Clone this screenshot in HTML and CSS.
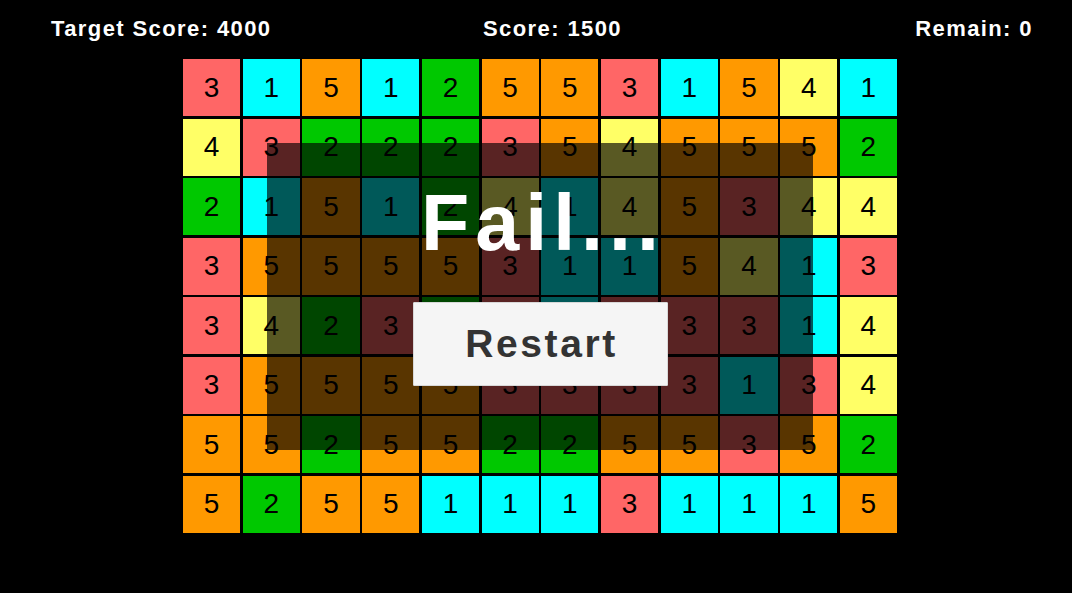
FILE: index.html
```html
<!DOCTYPE html>
<html>
<head>
    <title>Match Game</title>
    <link rel="stylesheet" href="styles.css">
</head>
<body>
    <div class="hud">
        <span class="target">Target Score: 4000</span>
        <span class="score">Score: 1500</span>
        <span class="remain">Remain: 0</span>
    </div>

    <div class="board-wrap">
        <div class="board" id="board"></div>
        <div class="shade"></div>
        <div class="result">
            <div class="fail">Fail...</div>
            <button class="restart">Restart</button>
        </div>
    </div>

    <script>
        const rows = [
            [3,1,5,1,2,5,5,3,1,5,4,1],
            [4,3,2,2,2,3,5,4,5,5,5,2],
            [2,1,5,1,2,4,1,4,5,3,4,4],
            [3,5,5,5,5,3,1,1,5,4,1,3],
            [3,4,2,3,2,3,1,3,3,3,1,4],
            [3,5,5,5,5,3,3,3,3,1,3,4],
            [5,5,2,5,5,2,2,5,5,3,5,2],
            [5,2,5,5,1,1,1,3,1,1,1,5]
        ];
        const board = document.getElementById('board');
        rows.forEach(row => {
            row.forEach(n => {
                const cell = document.createElement('div');
                cell.className = 'cell c' + n;
                cell.textContent = n;
                board.appendChild(cell);
            });
        });
    </script>
</body>
</html>
```

FILE: styles.css
```css
body {
    margin: 0;
    background: #000;
    font-family: "Liberation Sans", Arial, sans-serif;
}
.hud {
    display: flex;
    height: 59px;
    box-sizing: border-box;
    padding: 18px 39px 0 51px;
    color: #fff;
    font-size: 22px;
    font-weight: bold;
    line-height: 1;
    letter-spacing: 1.4px;
}
.target {
    width: 432px;
}
.score {
    margin-right: auto;
}
.board-wrap {
    position: relative;
    width: 714px;
    height: 474px;
    margin-left: 183px;
}
.board {
    display: grid;
    grid-template-columns: repeat(12, 1fr);
    grid-template-rows: repeat(8, 1fr);
    gap: 2.5px;
    width: 100%;
    height: 100%;
}
.cell {
    display: flex;
    align-items: center;
    justify-content: center;
    font-size: 28px;
    color: #000;
}
.c1 { background: #00ffff; }
.c2 { background: #00c800; }
.c3 { background: #ff6666; }
.c4 { background: #ffff66; }
.c5 { background: #ff9900; }
.shade {
    position: absolute;
    top: 84px;
    left: 84px;
    right: 84px;
    bottom: 83px;
    background: rgba(0, 0, 0, 0.65);
}
.result {
    position: absolute;
    top: 124px;
    left: 0;
    right: 0;
    display: flex;
    flex-direction: column;
    align-items: center;
}
.fail {
    color: #fff;
    font-size: 79px;
    font-weight: bold;
    line-height: 1;
    letter-spacing: 6px;
    margin-right: -6px;
}
.restart {
    margin-top: 40px;
    width: 255px;
    height: 84px;
    background: #f5f5f5;
    border: 1px solid #d8d8d8;
    border-radius: 1px;
    color: #333;
    font-family: "Liberation Sans", Arial, sans-serif;
    font-size: 39px;
    font-weight: bold;
    letter-spacing: 2.6px;
    padding: 0 0 0 3px;
}
```
